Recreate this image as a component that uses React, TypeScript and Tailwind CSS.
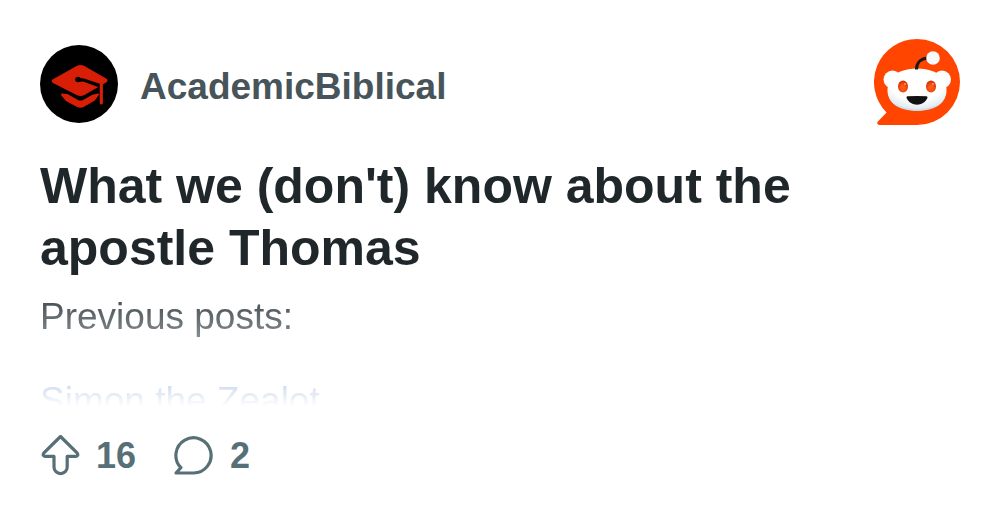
import { ReactNode } from "react";

const CapAvatar = () => (
  <svg viewBox="0 0 78 78" className="size-[78px] shrink-0" aria-hidden="true">
    <circle cx="39" cy="39" r="39" fill="#000" />
    <g fill="#d81e06" stroke="#d81e06" strokeWidth="2" strokeLinejoin="round">
      <path d="M13.500 35 37.500 21.700Q40.500 20.300 43.500 21.700L66 34.500Q67 35.500 66 36.500L43.500 49.300Q40.500 50.700 37.500 49.300L13.500 37Q12 36 13.500 35Z" />
      <path d="M22 49.500 27 50 37.500 55.800Q40.500 57.200 43.500 55.800L52 51 58 49.500 54 55 43.500 61Q40.500 62.300 37.500 61L26.500 55Z" />
    </g>
    <circle cx="38" cy="34.500" r="2.800" fill="#000" />
    <path d="M38 33 44 33.500 62 39.500V53h-2.500V42.500L43 36.500 38 37Z" fill="#000" />
    <path d="M61.300 39.500V58" stroke="#d81e06" strokeWidth="3.200" strokeLinecap="round" />
  </svg>
);

const SnooLogo = () => (
  <svg viewBox="0 0 86 86" className="size-[86px] shrink-0" role="img" aria-label="Reddit">
    <defs>
      <radialGradient id="head" cx="0.5" cy="0.3" r="0.75">
        <stop offset="0.600" stopColor="#fff" />
        <stop offset="0.850" stopColor="#e3edf2" />
        <stop offset="1" stopColor="#a9b9c4" />
      </radialGradient>
      <radialGradient id="eye" cx="0.5" cy="0.6" r="0.6">
        <stop offset="0.300" stopColor="#ff5a1a" />
        <stop offset="1" stopColor="#d42a00" />
      </radialGradient>
    </defs>
    <path d="M43 0a43 43 0 1 1 0 86H5.500c-2.200 0-3-2-1.600-3.500L12.600 73.400A43 43 0 0 1 43 0Z" fill="#ff4500" />
    <circle cx="18.500" cy="40.500" r="9" fill="#fbfdfe" />
    <circle cx="68" cy="40.500" r="9" fill="#fbfdfe" />
    <path d="M43 29.500C55 29.500 66 33.500 70 41 74 49 73.500 58 67 64.500 61 70 52 72 43 72S25 70 19 64.500C12.500 58 12 49 16 41 20 33.500 31 29.500 43 29.500Z" fill="url(#head)" />
    <path d="M42.500 30.500c0-6.500 4-11 11-11.500" fill="none" stroke="#1a1a1a" strokeWidth="3" />
    <circle cx="59" cy="19" r="6.800" fill="#f6fafc" />
    <ellipse cx="29" cy="47.500" rx="5" ry="6" fill="url(#eye)" />
    <ellipse cx="57" cy="47.500" rx="5" ry="6" fill="url(#eye)" />
    <circle cx="31" cy="45" r="1" fill="#ff9c6e" />
    <circle cx="59" cy="45" r="1" fill="#ff9c6e" />
    <path d="M33.500 57.300q9.500-.8 19 0c1 0 1.200 1 .8 2-4 8.500-16.600 8.500-20.600 0-.4-1-.2-2 .8-2Z" fill="#111" />
  </svg>
);

const UpvoteIcon = () => (
  <svg viewBox="0 0 40 42" className="h-[42px] w-10" fill="none" stroke="currentColor" strokeWidth="3.200" strokeLinejoin="round" aria-hidden="true">
    <path d="M20.500 1.500 37.300 18.200q1.500 2.700-1.500 3.200H27.200V32a6.600 6.600 0 0 1-13.200 0V21.400H5.200q-3-.5-1.500-3.200Z" />
  </svg>
);

const CommentIcon = () => (
  <svg viewBox="0 0 40 42" className="h-[42px] w-10" fill="none" stroke="currentColor" strokeWidth="3.200" strokeLinejoin="round" aria-hidden="true">
    <path d="M19.500 38H2L6.900 32.700A17.600 17.600 0 1 1 19.500 38Z" />
  </svg>
);

interface StatProps {
  icon: ReactNode;
  label: string;
  count: number;
}

const Stat = ({ icon, label, count }: StatProps) => (
  <button type="button" aria-label={`${count} ${label}`} className="flex items-center gap-4">
    {icon}
    <span>{count}</span>
  </button>
);

const App = () => {
  return (
    <main className="min-h-screen bg-white px-10 pt-[39px] pb-8 font-['Liberation_Sans',Arial,sans-serif]">
      <header className="flex items-center justify-between">
        <a href="#community" className="flex items-center gap-[22px] pt-1 text-[37px] font-bold text-[#475459]">
          <CapAvatar />
          <span className="pt-[6px]">AcademicBiblical</span>
        </a>
        <SnooLogo />
      </header>

      <h1 className="mt-[30px] max-w-[840px] text-[50px] leading-[62px] font-bold text-[#1f272b]">
        What we (don't) know about the apostle Thomas
      </h1>

      {/* preview text fades out towards the stats row */}
      <section className="mt-[10px] max-h-[118px] overflow-hidden mask-b-from-0% mask-b-to-100% text-[37px] leading-[56px] text-[#333d42]">
        <p>Previous posts:</p>
        <p className="mt-7">
          <a href="#simon" className="text-[#0045ac]">Simon the Zealot</a>
        </p>
      </section>

      <footer className="mt-7 flex items-center gap-[38px] text-[36px] leading-[42px] font-bold text-[#576f76]">
        <Stat icon={<UpvoteIcon />} label="upvotes" count={16} />
        <Stat icon={<CommentIcon />} label="comments" count={2} />
      </footer>
    </main>
  );
};

export default App;
